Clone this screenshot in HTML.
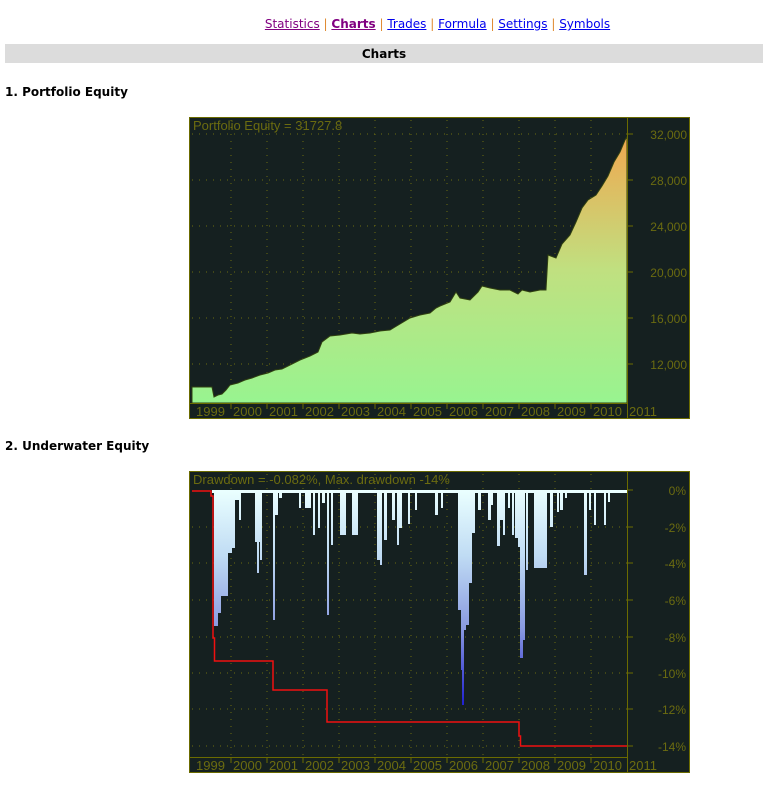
<!DOCTYPE html>
<html><head><meta charset="utf-8"><style>
body{margin:0;background:#fff;width:763px;height:785px;position:relative;overflow:hidden;font-family:"DejaVu Sans",Verdana,sans-serif;font-size:12px}
.nav{position:absolute;top:17px;left:0;width:875px;text-align:center;color:#e08a30}
.nav a{color:#00e;text-decoration:underline}
.nav a.v{color:#800080}
.bar{position:absolute;left:5px;top:44px;width:758px;height:19px;background:#dcdcdc;text-align:center;font-weight:bold;line-height:20px}
h3{position:absolute;left:5px;margin:0;font-size:12px;font-weight:bold}
svg{position:absolute;left:189px}
svg text{font-family:"Liberation Sans",sans-serif;font-size:12px;fill:#6b6b10}
svg text.y{font-size:13px}
</style></head><body>
<div class="nav"><a class="v">Statistics</a> | <a class="v" style="font-weight:bold">Charts</a> | <a>Trades</a> | <a>Formula</a> | <a>Settings</a> | <a>Symbols</a></div>
<div class="bar">Charts</div>
<h3 style="top:85px">1. Portfolio Equity</h3>
<h3 style="top:439px">2. Underwater Equity</h3>

<svg style="top:117px" width="501" height="302" viewBox="189 117 501 302">
<defs><linearGradient id="eg" gradientUnits="userSpaceOnUse" x1="0" y1="137" x2="0" y2="403"><stop offset="0" stop-color="#f0a850"/><stop offset="0.5" stop-color="#c0e080"/><stop offset="1" stop-color="#98f490"/></linearGradient></defs>
<rect x="189.5" y="117.5" width="500" height="301" fill="#152020" stroke="#6b6b00"/>
<g stroke="#6b6b10" stroke-dasharray="1,6">
<path d="M192 134H627M192 180H627M192 226H627M192 272H627M192 318H627M192 364H627M231 120V403M267 120V403M303 120V403M339 120V403M375 120V403M411 120V403M447 120V403M483 120V403M519 120V403M555 120V403M591 120V403"/></g>
<path fill="url(#eg)" stroke="#304010" d="M192 387H212L214 397L218 395L222 394L226 390L230 385L238 383L245 380L252 378L260 375L268 373L275 370L282 369L290 365L300 360L310 356L318 352L322 342L330 336L340 335L352 333L360 334L370 333L380 331L390 330L395 327L400 324L410 318L420 315L430 313L436 308L440 306L450 302L456 292L460 298L470 300L476 294L478 292L482 286L490 288L500 290L510 290L518 294L522 290L530 292L540 290L546 290L548 255L556 258L562 244L570 235L576 222L582 208L588 200L596 195L602 186L608 176L614 162L620 152L625 140L627 137V403H192Z"/>
<path stroke="#6b6b00" d="M627.5 118V418M190 403.5H627M231 403V409M267 403V409M303 403V409M339 403V409M375 403V409M411 403V409M447 403V409M483 403V409M519 403V409M555 403V409M591 403V409M627 134H633M627 180H633M627 226H633M627 272H633M627 318H633M627 364H633"/>
<text x="193" y="130" class="y">Portfolio Equity = 31727.8</text>
<g text-anchor="end"><text x="687" y="139">32,000</text><text x="687" y="185">28,000</text><text x="687" y="231">24,000</text><text x="687" y="277">20,000</text><text x="687" y="323">16,000</text><text x="687" y="369">12,000</text></g>
<g class="y"><text class="y" x="196" y="416">1999</text><text class="y" x="233" y="416">2000</text><text class="y" x="269" y="416">2001</text><text class="y" x="305" y="416">2002</text><text class="y" x="341" y="416">2003</text><text class="y" x="377" y="416">2004</text><text class="y" x="413" y="416">2005</text><text class="y" x="449" y="416">2006</text><text class="y" x="485" y="416">2007</text><text class="y" x="521" y="416">2008</text><text class="y" x="557" y="416">2009</text><text class="y" x="593" y="416">2010</text><text class="y" x="629" y="416">2011</text></g>
</svg>

<svg style="top:471px" width="501" height="302" viewBox="189 471 501 302">
<defs><linearGradient id="ug" gradientUnits="userSpaceOnUse" x1="0" y1="491" x2="0" y2="705"><stop offset="0" stop-color="#eaffff"/><stop offset="0.3" stop-color="#c0dcf4"/><stop offset="0.65" stop-color="#8898e0"/><stop offset="1" stop-color="#2020d0"/></linearGradient></defs>
<rect x="189.5" y="471.5" width="500" height="301" fill="#152020" stroke="#6b6b00"/>
<g stroke="#6b6b10" stroke-dasharray="1,6">
<path d="M192 527H627M192 563H627M192 600H627M192 637H627M192 673H627M192 709H627M192 746H627M231 474V757M267 474V757M303 474V757M339 474V757M375 474V757M411 474V757M447 474V757M483 474V757M519 474V757M555 474V757M591 474V757"/></g>
<g fill="url(#ug)">
<rect x="212" y="490" width="415" height="3"/>
<rect x="214" y="490" width="4" height="136"/><rect x="218" y="490" width="3" height="123"/><rect x="221" y="490" width="7" height="106"/><rect x="228" y="490" width="4" height="63"/><rect x="232" y="490" width="3" height="58"/><rect x="235" y="490" width="4" height="10"/><rect x="239" y="490" width="2" height="30"/>
<rect x="255" y="490" width="7" height="52"/><rect x="257" y="490" width="2" height="83"/><rect x="260" y="490" width="2" height="70"/><rect x="273" y="490" width="2" height="130"/><rect x="275" y="490" width="3" height="25"/><rect x="279" y="490" width="3" height="8"/>
<rect x="299" y="490" width="2" height="18"/><rect x="305" y="490" width="6" height="18"/><rect x="313" y="490" width="2" height="45"/><rect x="318" y="490" width="2" height="38"/><rect x="322" y="490" width="3" height="13"/><rect x="327" y="490" width="2" height="125"/><rect x="331" y="490" width="2" height="55"/>
<rect x="340" y="490" width="6" height="45"/><rect x="352" y="490" width="6" height="45"/><rect x="377" y="490" width="3" height="70"/><rect x="380" y="490" width="2" height="75"/><rect x="384" y="490" width="3" height="50"/><rect x="392" y="490" width="3" height="30"/><rect x="397" y="490" width="2" height="55"/><rect x="399" y="490" width="3" height="38"/><rect x="408" y="490" width="2" height="34"/><rect x="415" y="490" width="2" height="20"/><rect x="435" y="490" width="3" height="25"/><rect x="441" y="490" width="2" height="18"/>
<rect x="458" y="490" width="3" height="120"/><rect x="461" y="490" width="2" height="180"/><rect x="462" y="490" width="2" height="215"/><rect x="463" y="490" width="3" height="140"/><rect x="466" y="490" width="3" height="135"/><rect x="469" y="490" width="3" height="93"/><rect x="472" y="490" width="3" height="43"/><rect x="478" y="490" width="3" height="20"/><rect x="488" y="490" width="3" height="30"/><rect x="491" y="490" width="2" height="15"/><rect x="497" y="490" width="3" height="56"/><rect x="500" y="490" width="3" height="30"/><rect x="503" y="490" width="2" height="45"/><rect x="508" y="490" width="2" height="18"/><rect x="512" y="490" width="2" height="45"/><rect x="515" y="490" width="3" height="48"/><rect x="518" y="490" width="2" height="57"/><rect x="520" y="490" width="3" height="168"/><rect x="523" y="490" width="2" height="150"/><rect x="526" y="490" width="2" height="80"/><rect x="534" y="490" width="13" height="78"/><rect x="550" y="490" width="3" height="37"/><rect x="557" y="490" width="2" height="22"/><rect x="560" y="490" width="3" height="20"/><rect x="565" y="490" width="2" height="8"/><rect x="584" y="490" width="3" height="85"/><rect x="589" y="490" width="2" height="20"/><rect x="594" y="490" width="2" height="35"/><rect x="604" y="490" width="2" height="35"/><rect x="608" y="490" width="2" height="12"/>
</g>
<path fill="none" stroke="#f01010" stroke-width="1.5" d="M192 491H211V496H213V638H214.5V661H273V690H327V722H519V736H520.5V746H627"/>
<path stroke="#6b6b00" d="M627.5 472V772M190 757.5H627M231 757V763M267 757V763M303 757V763M339 757V763M375 757V763M411 757V763M447 757V763M483 757V763M519 757V763M555 757V763M591 757V763M627 490H633M627 527H633M627 563H633M627 600H633M627 637H633M627 673H633M627 709H633M627 746H633"/>
<text x="193" y="484" class="y">Drawdown = -0.082%, Max. drawdown -14%</text>
<g text-anchor="end"><text x="686" y="495">0%</text><text x="686" y="532">-2%</text><text x="686" y="568">-4%</text><text x="686" y="605">-6%</text><text x="686" y="642">-8%</text><text x="686" y="678">-10%</text><text x="686" y="714">-12%</text><text x="686" y="751">-14%</text></g>
<g><text class="y" x="196" y="770">1999</text><text class="y" x="233" y="770">2000</text><text class="y" x="269" y="770">2001</text><text class="y" x="305" y="770">2002</text><text class="y" x="341" y="770">2003</text><text class="y" x="377" y="770">2004</text><text class="y" x="413" y="770">2005</text><text class="y" x="449" y="770">2006</text><text class="y" x="485" y="770">2007</text><text class="y" x="521" y="770">2008</text><text class="y" x="557" y="770">2009</text><text class="y" x="593" y="770">2010</text><text class="y" x="629" y="770">2011</text></g>
</svg>
</body></html>
